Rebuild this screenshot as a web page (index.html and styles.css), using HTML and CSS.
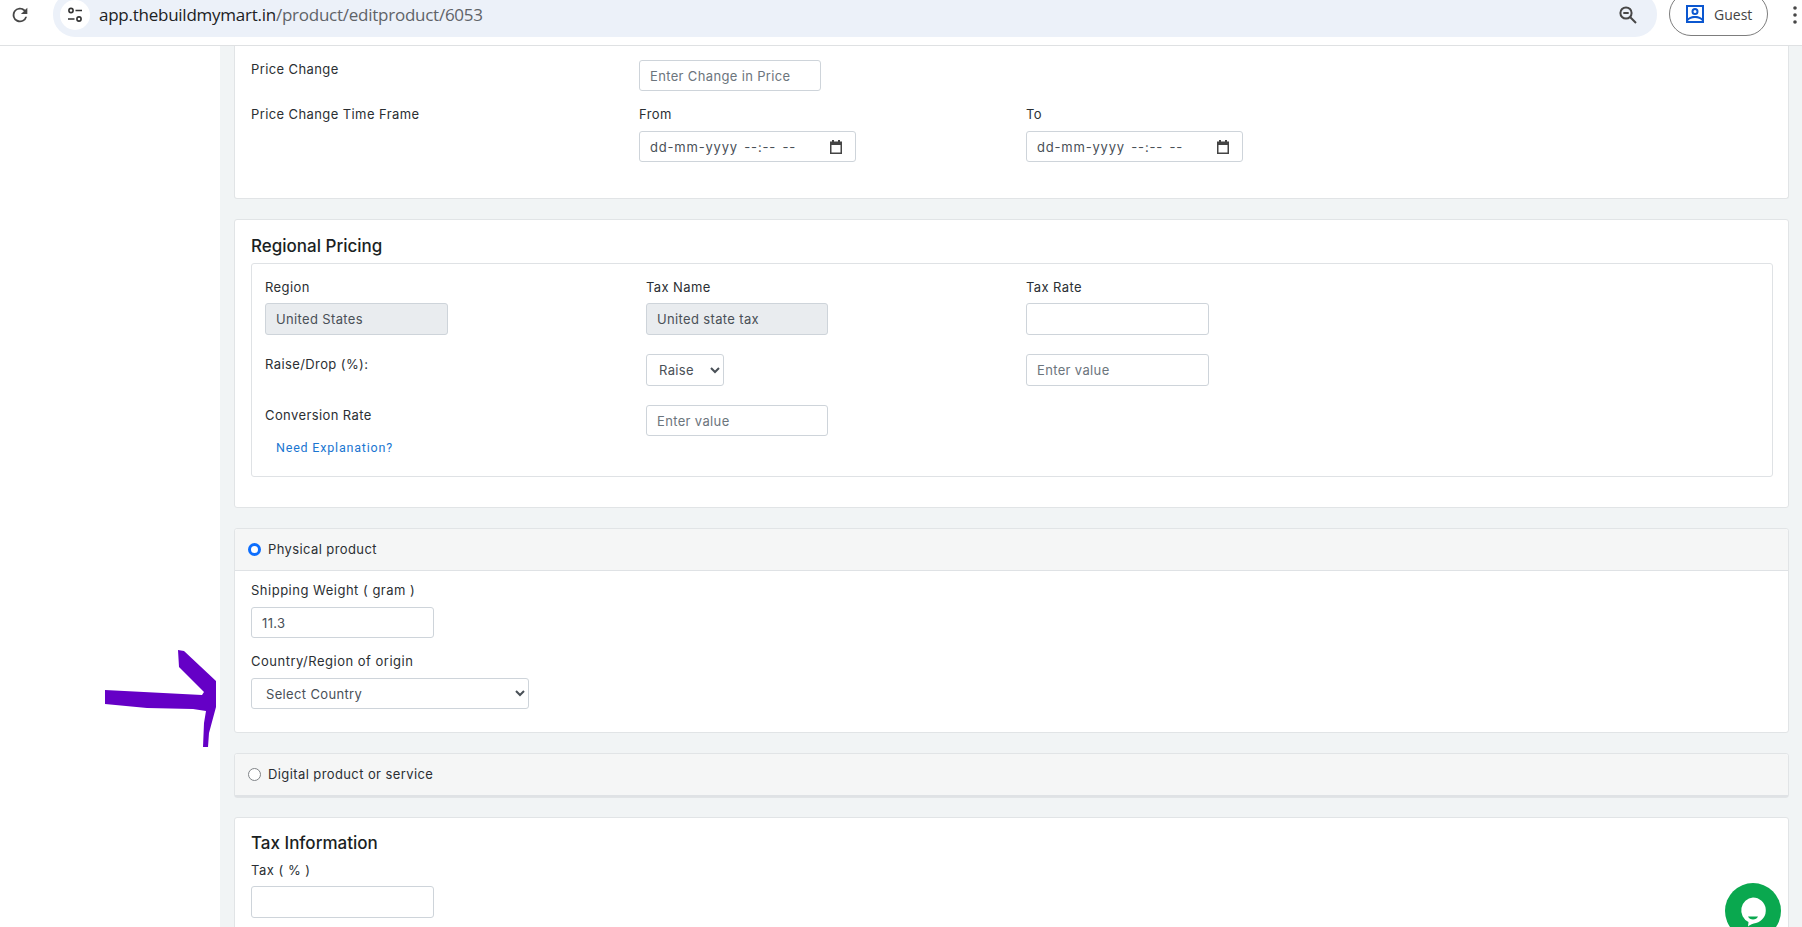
FILE: index.html
```html
<!DOCTYPE html>
<html lang="en">
<head>
<meta charset="utf-8">
<title>Edit Product</title>
<link rel="stylesheet" href="styles.css">
</head>
<body>
<header class="chrome">
  <svg class="reload" viewBox="0 0 24 24" width="22" height="22"><path d="M17.65 6.35A8 8 0 1 0 19.73 14h-2.08A6 6 0 1 1 12 6c1.66 0 3.14.69 4.22 1.78L13 11h7V4l-2.35 2.35z" fill="#474747"/></svg>
  <div class="omnibox">
    <span class="tune">
      <svg viewBox="0 0 20 20" width="20" height="20" fill="none" stroke="#333" stroke-width="1.6"><circle cx="6" cy="5.5" r="2.1"/><path d="M10.5 5.5H17M3 14h6.5"/><circle cx="14" cy="14" r="2.1"/></svg>
    </span>
    <span class="url"><b>app.thebuildmymart.in</b>/product/editproduct/6053</span>
    <svg class="zoomout" viewBox="0 0 20 20" width="20" height="20" fill="none" stroke="#474747" stroke-width="2"><circle cx="8" cy="8" r="5.6"/><path d="M5.3 8h5.4M12.3 12.3 18 18"/></svg>
  </div>
  <div class="guest">
    <svg viewBox="0 0 20 20" width="20" height="20"><path fill="#0b57d0" d="M1 1h18v18H1zM3 3v11.2C4.8 12.6 7.2 12 10 12s5.2.6 7 2.2V3zm0 14h14v-.3c-1.600-1.800-4-2.700-7-2.700s-5.400.9-7 2.700z" fill-rule="evenodd"/><circle cx="10" cy="7.500" r="2.500" fill="none" stroke="#0b57d0" stroke-width="2"/></svg>
    <span>Guest</span>
  </div>
  <svg class="dots" viewBox="0 0 6 20" width="6" height="20"><circle cx="3" cy="3" r="1.800"/><circle cx="3" cy="10" r="1.800"/><circle cx="3" cy="17" r="1.800"/></svg>
</header>

<div class="page">
  <aside class="sidebar"></aside>
  <main class="content">
    <section class="card card-top">
      <div class="price-grid">
        <label class="lbl lift">Price Change</label>
        <input class="field w181" placeholder="Enter Change in Price">
        <span></span>
        <label class="lbl">Price Change Time Frame</label>
        <div>
          <label class="lbl stack">From</label>
          <div class="field date"><span>dd-mm-yyyy --:-- --</span><svg viewBox="0 0 12 14" width="12" height="14"><path fill="#444" fill-rule="evenodd" d="M2 0h2v1.500h4V0h2v1.500h2V14H0V1.500h2zM1.500 5v7.500h9V5z"/></svg></div>
        </div>
        <div>
          <label class="lbl stack">To</label>
          <div class="field date"><span>dd-mm-yyyy --:-- --</span><svg viewBox="0 0 12 14" width="12" height="14"><path fill="#444" fill-rule="evenodd" d="M2 0h2v1.500h4V0h2v1.500h2V14H0V1.500h2zM1.500 5v7.500h9V5z"/></svg></div>
        </div>
      </div>
    </section>

    <section class="card card-regional">
      <h2 class="heading">Regional Pricing</h2>
      <div class="inner">
        <div>
          <label class="lbl stack">Region</label>
          <input class="field w183 tall" value="United States" disabled>
        </div>
        <div>
          <label class="lbl stack">Tax Name</label>
          <input class="field w182 tall" value="United state tax" disabled>
        </div>
        <div>
          <label class="lbl stack">Tax Rate</label>
          <input class="field w183 tall">
        </div>

        <label class="lbl">Raise/Drop (%):</label>
        <select class="field raise"><option>Raise</option></select>
        <input class="field w183 tall offset" placeholder="Enter value">

        <div>
          <label class="lbl conv">Conversion Rate</label>
          <a class="explain">Need Explanation?</a>
        </div>
        <input class="field w182 offset" placeholder="Enter value">
      </div>
    </section>

    <section class="card">
      <div class="option-head">
        <input type="radio" name="kind" class="radio" checked>
        <span class="opt-label">Physical product</span>
      </div>
      <div class="option-body">
        <label class="lbl stack wide">Shipping Weight ( gram )</label>
        <input class="field w183 gap-after" value="11.3">
        <label class="lbl stack wide">Country/Region of origin</label>
        <select class="field country"><option>Select Country</option></select>
      </div>
    </section>

    <section class="card">
      <div class="option-head last">
        <input type="radio" name="kind" class="radio">
        <span class="opt-label">Digital product or service</span>
      </div>
    </section>

    <section class="card card-tax">
      <h2 class="heading tax-heading">Tax Information</h2>
      <label class="lbl tight wide">Tax ( % )</label>
      <input class="field w183 tall">
    </section>
  </main>
</div>

<svg class="arrow" viewBox="0 0 120 105" width="120" height="105"><path fill="#6500c6" d="M3 10 100 15 102 12 77 -13 76 -30 82 -29 114 1 114 27 107 53 106 67 101 67 102 43 104 31 91 29 45 28 3 24z" transform="translate(0 30)"/></svg>

<div class="chat">
  <svg viewBox="0 0 32 32" width="32" height="32"><path fill="#fff" d="M16 2.500a13 13 0 0 1 3 25.600c-3 .5-6 1.900-8 3.400l.500-4.400A13 13 0 0 1 16 2.500z"/><path fill="#0aa84f" d="M11 21.500h10c-.8 2-2.700 3-5 3s-4.200-1-5-3z"/></svg>
</div>
</body>
</html>
```
FILE: styles.css
```css
* { box-sizing: border-box; }
html, body { margin: 0; height: 927px; overflow: hidden; background: #fff; }
body { font-family: Inter, "Noto Sans", sans-serif; font-size: 13px; color: #212529; position: relative; }

/* browser chrome */
.chrome { height: 46px; display: flex; align-items: flex-start; border-bottom: 1px solid #dfe1e3; background: #fff; overflow: hidden; }
.reload { margin: 4px 0 0 9px; flex: none; }
.omnibox { width: 1604px; height: 45px; margin: -8px 0 0 22px; padding: 0 19px 0 7px; background: #ecf1f9; border-radius: 22px; display: flex; align-items: center; flex: none; }
.tune { width: 30px; height: 30px; border-radius: 50%; background: #fff; display: flex; align-items: center; justify-content: center; flex: none; }
.url { margin-left: 9px; font-family: "Open Sans", sans-serif; font-size: 17px; color: #5f6368; white-space: nowrap; letter-spacing: -0.25px; flex: 1; }
.url b { font-weight: 400; color: #202124; }
.zoomout { flex: none; }
.guest { width: 99px; height: 44px; margin: -8px 0 0 12px; border: 1px solid #7d7d7d; border-radius: 22px; display: flex; align-items: center; padding-left: 15px; gap: 9px; flex: none; }
.guest span { font-family: "Open Sans", sans-serif; font-size: 14px; color: #444; }
.dots { margin: 5px 0 0 24px; fill: #474747; flex: none; }

/* page */
.page { display: flex; height: 881px; overflow: hidden; }
.sidebar { width: 220px; flex: none; background: #fff; }
.content { flex: 1; background: #f1f4f5; padding: 0 13px 0 14px; display: flex; flex-direction: column; gap: 20px; }
.card { background: #fff; border: 1px solid #e1e4e6; border-radius: 3px; flex: none; }
.card-top { border-top: 0; border-radius: 0 0 3px 3px; height: 153px; padding: 14px 16px 0; }
.card-regional { height: 289px; padding: 14px 15px 0 16px; }
.card-tax { padding: 13px 16px 40px; margin-top: -1px; }

.heading { margin: 0 0 5px; font-size: 17px; line-height: 24px; font-weight: 500; color: #1b1f23; }
.tax-heading { margin-bottom: 5px; }

.price-grid { display: grid; grid-template-columns: 388px 387px 1fr; row-gap: 13px; align-items: start; }
.inner { border: 1px solid #dfe2e5; border-radius: 3px; height: 214px; padding: 13px 13px 0; display: grid; grid-template-columns: 381px 380px 1fr; grid-template-rows: 58px 33px auto; row-gap: 18px; align-items: start; }

.lbl { display: block; line-height: 20px; font-size: 13px; letter-spacing: 0.4px; color: #2b2f33; white-space: nowrap; }
.lift { margin-top: -1px; }
.inner > label.lbl { margin-top: 1px; }
.stack { margin-bottom: 7px; }
.inner .stack { margin-bottom: 6px; }
.tight { margin-bottom: 6px; }
.conv { margin-top: 1px; }
.wide { letter-spacing: 0.5px; }

.field { display: block; height: 31px; border: 1px solid #ced4da; border-radius: 3px; padding: 0 10px; font-family: inherit; font-size: 13px; letter-spacing: 0.35px; color: #495057; background: #fff; outline: none; }
.field::placeholder { color: #6c757d; opacity: 1; }
.field:disabled { background: #e9ecef; color: #495057; opacity: 1; }
.tall { height: 32px; }
.w181 { width: 182px; }
.w182 { width: 182px; }
.w183 { width: 183px; }
.offset { margin-top: 1px; }
.gap-after { margin-bottom: 13px; }
.date { width: 217px; display: flex; align-items: center; justify-content: space-between; padding-right: 13px; letter-spacing: 0.8px; word-spacing: 2px; }
.raise { width: 78px; height: 32px; margin: 1px 0; padding: 0 4px 0 8px; }
.country { width: 278px; padding: 0 8px 0 10px; }

.explain { display: block; margin: 13px 0 0 11px; font-family: Roboto, sans-serif; font-size: 12.500px; line-height: 20px; letter-spacing: 0.8px; color: #1a76d1; }

.option-head { height: 42px; background: #f5f6f6; border-bottom: 1px solid #dfe2e5; display: flex; align-items: center; padding-left: 13px; gap: 7px; border-radius: 3px 3px 0 0; }
.option-head.last { border-bottom-width: 2px; height: 43px; }
.radio { appearance: none; margin: 0; width: 13px; height: 13px; border-radius: 50%; border: 1px solid #808488; background: #fff; flex: none; }
.radio:checked { border: 3.500px solid #0d6efd; }
.opt-label { font-size: 13px; letter-spacing: 0.4px; color: #2b2f33; position: relative; top: -1px; }
.option-body { padding: 9px 16px 23px; }

/* overlays */
.arrow { position: absolute; left: 102px; top: 650px; }
.chat { position: absolute; left: 1725px; top: 883px; width: 56px; height: 56px; border-radius: 50%; background: #0aa84f; display: flex; align-items: center; justify-content: center; }
```
